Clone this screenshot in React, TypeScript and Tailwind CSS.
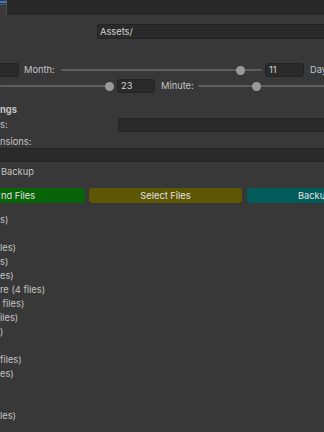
import React from "react";

const font = { fontFamily: "Inter, 'Noto Sans', sans-serif" };

function Field({ className = "", children }: { className?: string; children?: React.ReactNode }) {
  return (
    <div
      className={`h-[14px] shrink-0 bg-[#2a2a2a] border border-[#232323] rounded-[3px] flex items-center text-[#d2d2d2] ${className}`}
    >
      {children}
    </div>
  );
}

function Slider({ className = "", thumb }: { className?: string; thumb: number }) {
  return (
    <div className={`relative h-[14px] shrink-0 flex items-center ${className}`}>
      <div className="h-[2px] w-full bg-[#5e5e5e] rounded-full" />
      <div
        className="absolute w-[9px] h-[9px] rounded-full bg-[#9a9a9a] top-[2.5px]"
        style={{ left: thumb - 4.5 }}
      />
    </div>
  );
}

export default function App() {
  const lines = [
    "s)",
    "",
    "les)",
    "s)",
    "es)",
    "re (4 files)",
    " files)",
    "iles)",
    ")",
    "",
    "files)",
    "es)",
    "",
    "",
    "les)",
  ];
  return (
    <div
      className="w-[324px] h-[432px] overflow-hidden bg-[#383838] text-[9.3px] text-[#c4c4c4] flex flex-col"
      style={font}
    >
      {/* top bar */}
      <div className="h-[15px] flex shrink-0">
        <div className="w-[7px] shrink-0 relative bg-[#3a3a3a] border-r border-[#4a4a4a]">
          <div className="absolute left-0 top-[1px] w-[7px] h-[1.5px] bg-[#3a79bb]" />
          <div className="absolute left-0 top-[4px] w-[7px] h-[1px] bg-[#35587a]" />
        </div>
        <div className="flex-1 bg-[#282828]" />
      </div>

      {/* path field */}
      <div className="mt-[9px] pl-[97px] shrink-0 flex">
        <Field className="flex-1 h-[15px] rounded-r-none border-r-0 pl-[2px]">Assets/</Field>
      </div>

      {/* row 1 */}
      <div className="mt-[24px] h-[14px] flex items-center shrink-0 overflow-hidden">
        <Field className="w-[19px] rounded-l-none border-l-0" />
        <span className="ml-[5px] w-[37px] shrink-0">Month:</span>
        <Slider className="w-[201px]" thumb={179} />
        <Field className="ml-[3px] w-[39px] pl-[3px]">11</Field>
        <span className="ml-[6px] shrink-0 whitespace-nowrap">Day:</span>
      </div>

      {/* row 2 */}
      <div className="mt-[2px] h-[14px] flex items-center shrink-0 overflow-hidden">
        <Slider className="w-[114px]" thumb={109} />
        <Field className="ml-[3px] w-[38px] pl-[3px]">23</Field>
        <span className="ml-[6px] w-[37px] shrink-0">Minute:</span>
        <Slider className="w-[140px]" thumb={58} />
      </div>

      {/* settings header */}
      <div className="mt-[10px] h-[14px] flex items-center font-bold shrink-0">ngs</div>

      <div className="mt-[1px] h-[14px] flex items-center shrink-0">
        <span className="w-[118px] shrink-0">s:</span>
        <Field className="flex-1 rounded-r-none border-r-0" />
      </div>

      <div className="mt-[3px] h-[13px] flex items-center shrink-0">nsions:</div>

      <Field className="rounded-none border-x-0" />

      <div className="mt-[3px] h-[14px] flex items-center pl-[1px] shrink-0">Backup</div>

      {/* buttons */}
      <div className="mt-[9px] h-[15px] flex text-[#e2e2e2] shrink-0 overflow-hidden">
        <div className="w-[85px] shrink-0 bg-[#076407] rounded-r-[3px] flex items-center pl-[1px] shadow-[0_1px_1px_#2a2438]">
          nd Files
        </div>
        <div className="ml-[4px] w-[153px] shrink-0 bg-[#5d5603] rounded-[3px] flex items-center justify-center shadow-[0_1px_1px_#2a2438]">
          Select Files
        </div>
        <div className="ml-[5px] w-[153px] shrink-0 bg-[#035c5c] rounded-[3px] flex items-center pl-[51px] shadow-[0_1px_1px_#2a2438]">
          Backup
        </div>
      </div>

      {/* list */}
      <div className="mt-[10px] flex flex-col shrink-0">
        {lines.map((l, i) => (
          <div key={i} className="h-[14px] flex items-center whitespace-pre">
            {l}
          </div>
        ))}
      </div>
    </div>
  );
}
